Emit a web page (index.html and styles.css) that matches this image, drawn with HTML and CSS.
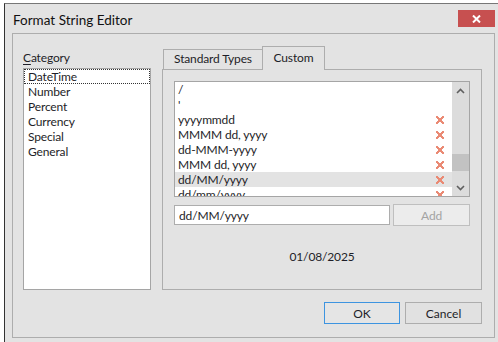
FILE: index.html
```html
<!DOCTYPE html>
<html lang="en">
<head>
  <meta charset="UTF-8" />
  <title>Format String Editor</title>
  <link rel="stylesheet" href="styles.css">
</head>
<body>
  <div class="window">
    <div class="frame">
      <div class="titlebar">
        <span class="title">Format String Editor</span>
        <div class="close">
          <svg width="9" height="8" viewBox="0 0 9 8"><path d="M1 0.5 L8 7.5 M8 0.5 L1 7.5" stroke="#fff" stroke-width="2"/></svg>
        </div>
      </div>

      <div class="group">
        <div class="top">
          <!-- Category -->
          <div class="category">
            <div class="label"><u>C</u>ategory</div>
            <ul class="catlist">
              <li class="focus">DateTime</li>
              <li>Number</li>
              <li>Percent</li>
              <li>Currency</li>
              <li>Special</li>
              <li>General</li>
            </ul>
          </div>

          <!-- Tabs -->
          <div class="tabs">
            <div class="tabstrip">
              <div class="tab">Standard Types</div>
              <div class="tab active">Custom</div>
            </div>
            <div class="panel">
              <div class="listbox">
                <ul class="items">
                  <li>/</li>
                  <li>'</li>
                  <li>yyyymmdd <span class="del"></span></li>
                  <li>MMMM dd, yyyy <span class="del"></span></li>
                  <li>dd-MMM-yyyy <span class="del"></span></li>
                  <li>MMM dd, yyyy <span class="del"></span></li>
                  <li class="selected">dd/MM/yyyy <span class="del"></span></li>
                  <li>dd/mm/yyyy <span class="del"></span></li>
                </ul>
                <div class="scrollbar">
                  <div class="arrow">
                    <svg width="9" height="6" viewBox="0 0 9 6"><path d="M1 5 L4.5 1.5 L8 5" fill="none" stroke="#606060" stroke-width="1.6"/></svg>
                  </div>
                  <div class="track"><div class="thumb"></div></div>
                  <div class="arrow">
                    <svg width="9" height="6" viewBox="0 0 9 6"><path d="M1 1 L4.5 4.5 L8 1" fill="none" stroke="#606060" stroke-width="1.6"/></svg>
                  </div>
                </div>
              </div>

              <div class="inputrow">
                <input class="format" type="text" value="dd/MM/yyyy">
                <button class="add" disabled>Add</button>
              </div>

              <div class="preview">01/08/2025</div>
            </div>
          </div>
        </div>

        <div class="buttons">
          <button class="btn ok">OK</button>
          <button class="btn">Cancel</button>
        </div>
      </div>
    </div>
  </div>
</body>
</html>
```

FILE: styles.css
```css
body {
  margin: 0;
  background-color: #ffffff;
  font-family: 'Lato', 'Noto Sans', sans-serif;
  font-size: 12px;
  letter-spacing: -0.15px;
  color: #1e1e28;
  overflow: hidden;
}

ul {
  list-style: none;
  margin: 0;
  padding: 0;
}

.window {
  margin: 3px 0 0 4px;
  width: 510px;
  height: 338px;
  background-color: #e3e3e3;
  border-left: 1px solid #333;
  border-top: 1px solid #777;
}

.frame {
  margin-left: 7px;
  width: 483px;
}

.titlebar {
  display: flex;
  align-items: flex-start;
  justify-content: space-between;
  height: 29px;
}

.title {
  padding: 3px 0 0 1px;
  line-height: 26px;
  font-size: 13.5px;
  letter-spacing: 0;
  color: #111;
}

.close {
  margin-top: 6px;
  width: 37px;
  height: 17px;
  background-color: #c75050;
  display: flex;
  align-items: center;
  justify-content: center;
}

.group {
  border: 1px solid #adadad;
  padding: 12px 12px 13px 10px;
  box-sizing: border-box;
  height: 305px;
  display: flex;
  flex-direction: column;
  gap: 12px;
}

.top {
  display: flex;
  gap: 11px;
  height: 244px;
}

/* category column */
.category {
  width: 128px;
  display: flex;
  flex-direction: column;
}

.label {
  padding-top: 4px;
  line-height: 16px;
  margin-bottom: 2px;
}

.label u {
  text-underline-offset: 2px;
}

.catlist {
  flex: 1;
  background-color: #fff;
  border: 1px solid #a5a5a5;
}

.catlist li {
  line-height: 15px;
  padding-left: 4px;
}

.catlist li.focus {
  outline: 1px dotted #333;
  outline-offset: -1px;
}

/* tabs */
.tabs {
  width: 320px;
  display: flex;
  flex-direction: column;
}

.tabstrip {
  display: flex;
  align-items: flex-end;
  height: 23px;
  padding-left: 1px;
}

.tab {
  box-sizing: border-box;
  border: 1px solid #adadad;
  border-bottom: none;
  background-color: #e3e3e3;
  text-align: center;
  line-height: 18px;
  width: 100px;
  height: 20px;
}

.tab.active {
  position: relative;
  z-index: 1;
  width: 63px;
  height: 24px;
  margin-left: -1px;
  margin-bottom: -1px;
  padding-top: 2px;
}

.panel {
  flex: 1;
  border: 1px solid #adadad;
  padding: 11px 11px 0 11px;
}

.listbox {
  display: flex;
  height: 114px;
  border: 1px solid #a5a5a5;
  background-color: #fff;
}

.items {
  flex: 1;
  overflow: hidden;
}

.items li {
  display: flex;
  align-items: center;
  justify-content: space-between;
  height: 15px;
  padding: 0 8px 0 3px;
}

.items li.selected {
  background-color: #e3e3e3;
}

.del {
  width: 8px;
  height: 8px;
  background:
    linear-gradient(45deg, transparent 43%, #ea8a74 43%, #ea8a74 57%, transparent 57%),
    linear-gradient(-45deg, transparent 43%, #ea8a74 43%, #ea8a74 57%, transparent 57%);
}

.scrollbar {
  width: 17px;
  background-color: #dcdcdc;
  display: flex;
  flex-direction: column;
}

.arrow {
  height: 17px;
  display: flex;
  align-items: center;
  justify-content: center;
}

.track {
  flex: 1;
}

.thumb {
  margin-top: 55px;
  height: 17px;
  background-color: #c2c2c2;
}

.inputrow {
  display: flex;
  align-items: center;
  gap: 3px;
  margin-top: 7px;
}

.format {
  box-sizing: border-box;
  width: 217px;
  height: 20px;
  border: 1px solid #adadad;
  padding: 0 0 0 4px;
  font-family: inherit;
  font-size: 12px;
  letter-spacing: inherit;
  color: inherit;
  outline: none;
}

.add {
  box-sizing: border-box;
  width: 77px;
  height: 22px;
  border: 1px solid #bfbfbf;
  background-color: #ececec;
  font-family: inherit;
  font-size: 12px;
  color: #a3a3a3;
  padding: 0;
}

.preview {
  margin-top: 23px;
  text-align: center;
  line-height: 15px;
}

.buttons {
  display: flex;
  justify-content: flex-end;
  gap: 5px;
}

.btn {
  box-sizing: border-box;
  width: 77px;
  height: 22px;
  border: 1px solid #adadad;
  background-color: #e1e1e1;
  font-family: inherit;
  font-size: 12px;
  color: #1e1e28;
  padding: 0;
}

.btn.ok {
  width: 76px;
  border-color: #3d94e0;
  background-color: #e5e5e5;
}
```
